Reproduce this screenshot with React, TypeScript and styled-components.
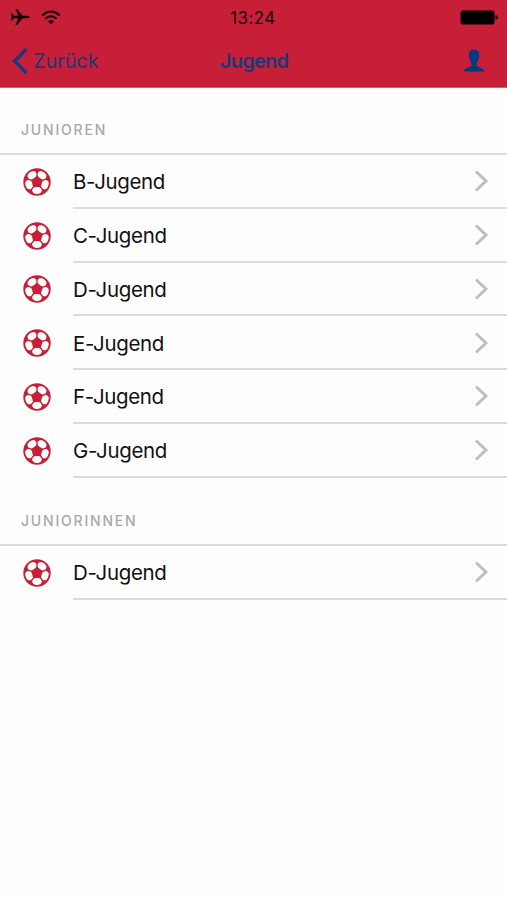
import React from "react";
import styled, { createGlobalStyle } from "styled-components";

const RED = "#c81f38";
const NAVY = "#173a7a";

const GlobalStyle = createGlobalStyle`
  *, *::before, *::after { box-sizing: border-box; }
  body { margin: 0; background: #fff; }
`;

const Screen = styled.div`
  width: 507px;
  height: 900px;
  overflow: hidden;
  background: #fefefe;
  color: #111;
  font-family: Inter, "Liberation Sans", sans-serif;
`;

const Header = styled.header`
  height: 88px;
  background: ${RED};
  border-bottom: 1px solid #d5606f;
`;

const StatusBar = styled.div`
  height: 34px;
  display: grid;
  grid-template-columns: 1fr auto 1fr;
  align-items: center;
  padding: 0 9px 0 10px;
`;

const StatusIcons = styled.div`
  display: flex;
  align-items: center;
  gap: 10px;
`;

const Clock = styled.time`
  font-size: 17px;
  line-height: 20px;
  letter-spacing: 0.4px;
  color: #1c0508;
  padding-top: 1px;
  margin-left: -2px;
`;

const BatteryIcon = styled.svg`
  justify-self: end;
  display: block;
`;

const NavBar = styled.nav`
  height: 53px;
  display: grid;
  grid-template-columns: 1fr auto 1fr;
  align-items: center;
  padding: 0 22px 0 12px;
  color: ${NAVY};
`;

const BackButton = styled.button`
  display: flex;
  align-items: center;
  gap: 4px;
  padding: 0;
  border: 0;
  background: none;
  color: inherit;
  font: 400 20px/26px Inter, "Liberation Sans", sans-serif;
  letter-spacing: -0.1px;
`;

const Title = styled.h1`
  margin: 0 0 0 11px;
  font-size: 20px;
  line-height: 26px;
  font-weight: 600;
  letter-spacing: -0.75px;
`;

const ProfileButton = styled.button`
  justify-self: end;
  display: flex;
  padding: 0;
  border: 0;
  background: none;
`;

const SectionTitle = styled.h2<{ $height: number }>`
  margin: 0;
  height: ${(p) => p.$height}px;
  display: flex;
  align-items: flex-end;
  padding: 0 21px 14px;
  border-bottom: 2px solid #dcdcdd;
  color: #a8a8aa;
  font-size: 14px;
  line-height: 18px;
  font-weight: 500;
  letter-spacing: 1.8px;
`;

const List = styled.ul`
  margin: 0;
  padding: 0;
  list-style: none;
`;

const Row = styled.li`
  height: 53.75px;
  display: grid;
  grid-template-columns: 73px 1fr;
  align-items: stretch;
`;

const IconCell = styled.div`
  display: flex;
  align-items: center;
  padding-left: 23px;
`;

const RowBody = styled.div`
  display: flex;
  align-items: center;
  justify-content: space-between;
  padding: 1px 18px 0 0;
  border-bottom: 2px solid #dcdcdd;
`;

const RowLabel = styled.span`
  padding-top: 2px;
  font-size: 20.5px;
  line-height: 26px;
  letter-spacing: -0.36px;
`;

const Ball = () => (
  <svg width="28" height="28" viewBox="-14 -14 28 28">
    <circle r="13.7" fill={RED} />
    {[0, 72, 144, 216, 288].map((angle) => (
      <path
        key={angle}
        transform={`rotate(${angle})`}
        d="M-2.7 5.2Q0 4.6 2.7 5.2Q4.5 6.7 4.9 8.3Q4.7 10 3.5 11.1Q0 12.8-3.5 11.1Q-4.7 10-4.9 8.3Q-4.5 6.7-2.7 5.2Z"
        fill="#fff"
      />
    ))}
  </svg>
);

const Chevron = () => (
  <svg width="15" height="24" viewBox="0 0 15 24">
    <path d="M2 2.5 12 12 2 21.5" fill="none" stroke="#bebec0" strokeWidth="2.9" />
  </svg>
);

const Plane = () => (
  <svg width="21" height="18" viewBox="0 0 21 18">
    <path
      d="M20 9Q19 7.7 17 7.7H12.5L7.2 1H5.4L8.3 7.7H4L1.8 5H.7L1.8 9 .7 13H1.8L4 10.3H8.3L5.4 17H7.2L12.5 10.3H17Q19 10.3 20 9Z"
      fill="#140306"
    />
  </svg>
);

const Wifi = () => (
  <svg width="20" height="15" viewBox="0 0 20 15">
    <g fill="none" stroke="#140306" strokeWidth="2">
      <path d="M1.2 5.4Q10-2.4 18.8 5.4" />
      <path d="M4.4 8.7Q10 3.9 15.6 8.7" />
    </g>
    <path d="M7 11.2Q10 8.8 13 11.2L10 14.3Z" fill="#140306" />
  </svg>
);

const sections = [
  { title: "JUNIOREN", height: 67, teams: ["B-Jugend", "C-Jugend", "D-Jugend", "E-Jugend", "F-Jugend", "G-Jugend"] },
  { title: "JUNIORINNEN", height: 68.5, teams: ["D-Jugend"] },
];

export default function App() {
  return (
    <Screen>
      <GlobalStyle />
      <Header>
        <StatusBar>
          <StatusIcons>
            <Plane />
            <Wifi />
          </StatusIcons>
          <Clock>13:24</Clock>
          <BatteryIcon width="38" height="15" viewBox="0 0 38 15">
            <rect x=".5" y=".5" width="34" height="14" rx="2.5" fill="#000" />
            <path d="M35.5 5Q38 5.6 38 7.5T35.5 10Z" fill="#140306" />
          </BatteryIcon>
        </StatusBar>
        <NavBar>
          <BackButton>
            <svg width="17" height="28" viewBox="0 0 17 28">
              <path d="M14.5 2 2.7 14 14.5 26" fill="none" stroke={NAVY} strokeWidth="3.5" />
            </svg>
            Zurück
          </BackButton>
          <Title>Jugend</Title>
          <ProfileButton aria-label="Profil">
            <svg width="22" height="23" viewBox="0 0 22 23">
              <path
                d="M11 .5C7.7.5 5.7 2.4 5.8 6 5.2 6.3 5.5 9 6.5 9.7 7 12 8 13 8.3 14V16.5C7.5 18.5 1 18.6.5 22.5H21.5C21 18.6 14.5 18.5 13.7 16.5V14C14 13 15 12 15.5 9.7 16.5 9 16.8 6.3 16.2 6 16.3 2.4 14.3.5 11 .5Z"
                fill="#063a7c"
              />
            </svg>
          </ProfileButton>
        </NavBar>
      </Header>
      <main>
        {sections.map((section) => (
          <section key={section.title}>
            <SectionTitle $height={section.height}>{section.title}</SectionTitle>
            <List>
              {section.teams.map((team) => (
                <Row key={team}>
                  <IconCell>
                    <Ball />
                  </IconCell>
                  <RowBody>
                    <RowLabel>{team}</RowLabel>
                    <Chevron />
                  </RowBody>
                </Row>
              ))}
            </List>
          </section>
        ))}
      </main>
    </Screen>
  );
}
